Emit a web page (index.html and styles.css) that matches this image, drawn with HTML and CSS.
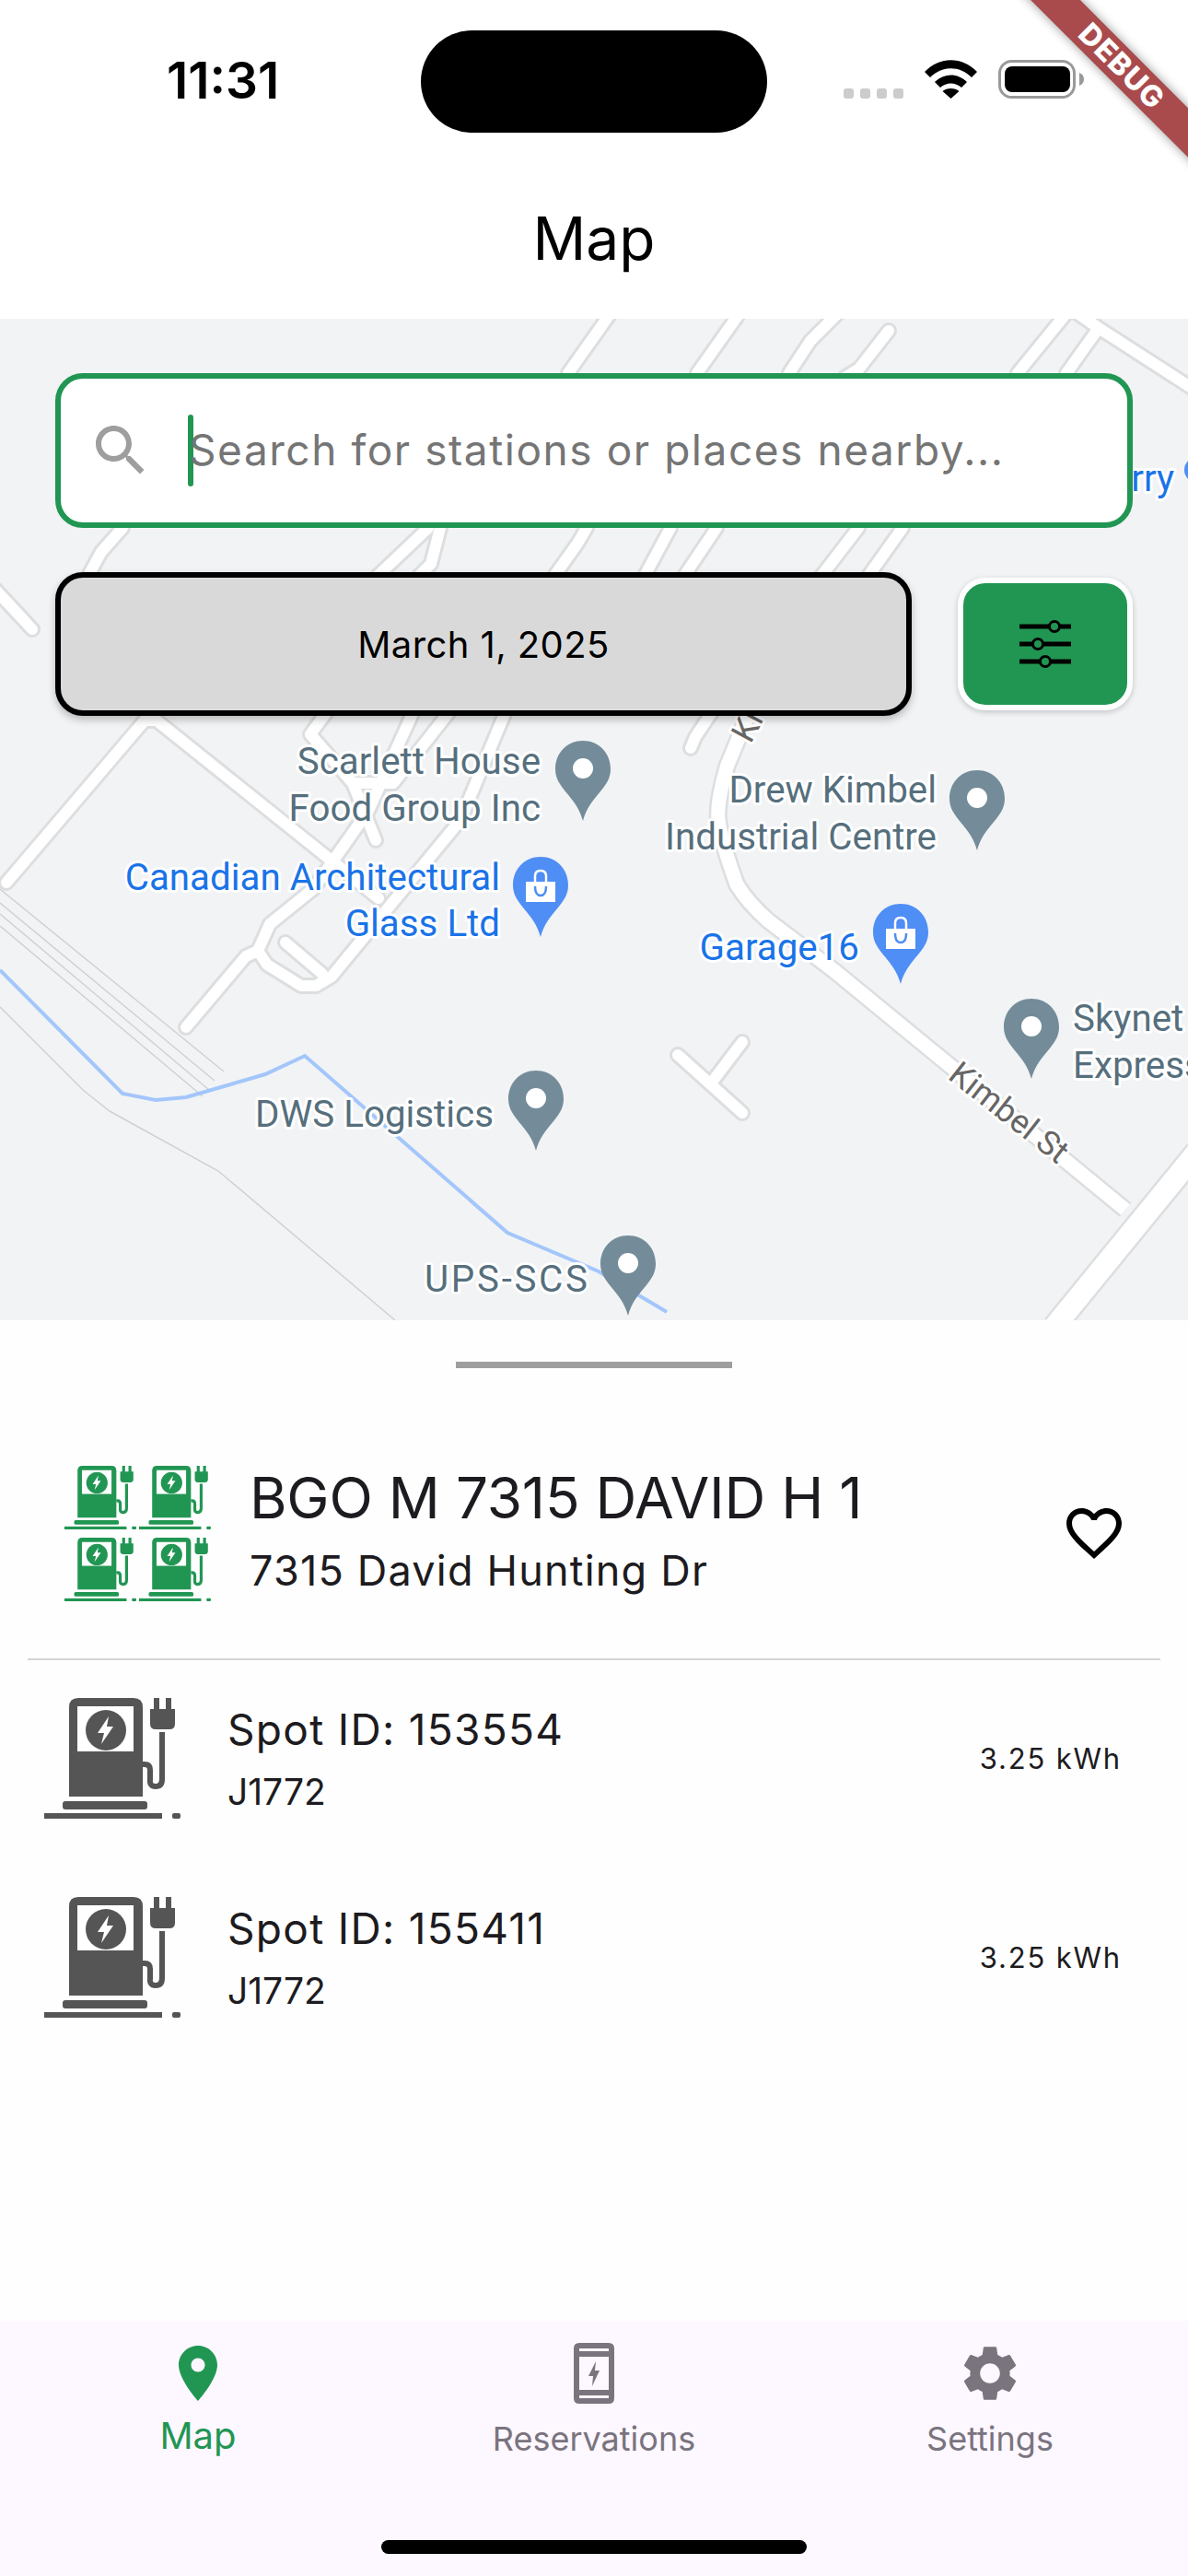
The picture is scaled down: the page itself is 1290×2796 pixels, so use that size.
FILE: index.html
```html
<!DOCTYPE html>
<html lang="en">
<head>
    <meta charset="UTF-8">
    <meta name="viewport" content="width=device-width, initial-scale=1.0">
    <title>Map</title>
    <link rel="stylesheet" href="styles.css">
</head>
<body>
    <svg class="defs" width="0" height="0">
        <defs>
            <symbol id="charger" viewBox="0 0 150 131">
                <path fill="currentColor" d="M27 107V10Q27 0 37 0H97Q107 0 107 10V107Z"/>
                <rect x="36" y="9" width="61" height="49" fill="#fff"/>
                <circle cx="67" cy="35" r="22" fill="currentColor"/>
                <polygon fill="#fff" points="70,20 58,38 65,38 62,50 75,31 68,31"/>
                <rect x="119" y="0" width="6" height="14" fill="currentColor"/>
                <rect x="132" y="0" width="6" height="14" fill="currentColor"/>
                <path fill="currentColor" d="M115 12H142V28Q142 34 136 34H121Q115 34 115 28Z"/>
                <path fill="none" stroke="currentColor" stroke-width="6" d="M128 37V88Q128 96 121 96T115 88V78Q115 72 109 72H107"/>
                <rect x="20" y="112" width="92" height="9" rx="3" fill="currentColor"/>
                <rect x="0" y="125" width="128" height="6" fill="currentColor"/>
                <rect x="139" y="125" width="9" height="6" rx="2" fill="currentColor"/>
            </symbol>
            <symbol id="pin-gray" viewBox="0 0 60 87">
                <path fill="#748c99" d="M30 0C13 0 0 13 0 31C0 52 23 60 30 87C37 60 60 52 60 31C60 13 47 0 30 0Z"/>
                <circle cx="30" cy="30" r="11" fill="#fff"/>
            </symbol>
            <symbol id="pin-blue" viewBox="0 0 60 87">
                <path fill="#4f8ef5" d="M30 0C13 0 0 13 0 31C0 52 23 60 30 87C37 60 60 52 60 31C60 13 47 0 30 0Z"/>
                <path fill="none" stroke="#fff" stroke-width="2.5" d="M24 28V21Q24 15 30 15T36 21V28"/>
                <rect x="14" y="27" width="32" height="22" fill="#fff"/>
                <path fill="none" stroke="#4f8ef5" stroke-width="2.5" d="M24 32Q24 42 30 42T36 32"/>
            </symbol>
            <g id="roads" fill="none" stroke-linecap="round" stroke-linejoin="round">
                <path d="M663 340L617 405M803 340L757 405M910 340L880 370L857 405M965 359L933 400L917 410"/>
                <path d="M1158 340L1105 405M1193 356L1158 405M1170 340L1193 356L1300 425"/>
                <path d="M133 573L110 599L98 621L80 660M465 573L410 625M478 573L468 612L455 625"/>
                <path d="M637 573L627 590L602 625M728 573L700 625M778 573L743 625M932 573L892 625M980 573L943 625"/>
                <path d="M-5 640L35 683"/>
                <path d="M7 958L157 782L170 782L411 975"/>
                <path d="M357 770L337 797L383 850L408 912M383 850L427 850L490 770"/>
                <path d="M202 1115L267 1038L280 1032L293 1003L340 965L400 880L450 770"/>
                <path d="M280 1032L290 1047L327 1070L343 1070L360 1060L500 890L550 770"/>
                <path d="M310 1023L350 1057"/>
                <path d="M775 770L755 800L750 812"/>
                <path d="M806 1131L772 1176M736 1145L806 1208"/>
            </g>
            <path id="kimbel" fill="none" d="M815 770L790 830Q778 870 780 890T800 960Q812 980 835 1000L905 1053L1222 1313"/>
        </defs>
    </svg>

    <div class="debug-corner"><div class="debug-banner">DEBUG</div></div>

    <header class="status-bar">
        <div class="time">11:31</div>
        <div class="island"></div>
        <div class="status-icons">
            <div class="signal"><span></span><span></span><span></span><span></span></div>
            <svg class="wifi" width="57" height="42" viewBox="0 0 57 42">
                <path d="M0 13C16 -4 41 -4 57 13L51 19C38 6 19 6 6 19Z"/>
                <path d="M11 24C21 14 36 14 46 24L40 30C33 24 24 24 17 30Z"/>
                <path d="M19.5 34C24 30 33 30 37.5 34L28.5 42Z"/>
            </svg>
            <svg class="battery" width="93" height="42" viewBox="0 0 93 42">
                <rect x="1.5" y="1.5" width="81" height="39" rx="13" fill="none" stroke="#999" stroke-width="3"/>
                <rect x="7" y="7" width="71" height="28" rx="8"/>
                <path fill="#999" d="M88 14Q93 16 93 21T88 28Z"/>
            </svg>
        </div>
    </header>
    <div class="app-title">Map</div>

    <section class="map">
        <svg class="map-canvas" width="1290" height="1087" viewBox="0 346 1290 1087">
            <rect x="0" y="346" width="1290" height="1087" fill="#f1f3f5"/>
            <g fill="none" stroke="#cfd1d3" stroke-width="1.5">
                <path d="M0 965L243 1163M0 980L233 1173M0 992L227 1183M0 1005L220 1190"/>
                <path d="M0 1093L90 1183L119 1206L237 1271L429 1433"/>
            </g>
            <use href="#roads" stroke="#dcdee0" stroke-width="18"/>
            <use href="#roads" stroke="#fff" stroke-width="12"/>
            <use href="#kimbel" stroke="#dcdee0" stroke-width="20"/>
            <use href="#kimbel" stroke="#fff" stroke-width="15"/>
            <path d="M1145 1440L1300 1250" fill="none" stroke="#dcdee0" stroke-width="28"/>
            <path d="M1145 1440L1300 1250" fill="none" stroke="#fff" stroke-width="23"/>
            <path class="river" d="M0 1053L133 1187L169 1194L202 1191L288 1166L331 1146L551 1338L650 1380L724 1424"/>

            <text class="label road-label" transform="translate(1028 1170) rotate(38)">Kimbel St</text>
            <text class="label road-label" transform="translate(815 808) rotate(-62)">Ki</text>
            <text class="label blue" x="1275" y="533" text-anchor="end">rry</text>
            <circle cx="1300" cy="510" r="14" fill="#4f8ef5"/>

            <g class="labels">
                <text class="label gray" x="587" y="840" text-anchor="end">Scarlett House</text>
                <text class="label gray" x="587" y="891" text-anchor="end">Food Group Inc</text>
                <text class="label gray" x="1017" y="871" text-anchor="end">Drew Kimbel</text>
                <text class="label gray" x="1017" y="922" text-anchor="end">Industrial Centre</text>
                <text class="label blue" x="543" y="966" text-anchor="end">Canadian Architectural</text>
                <text class="label blue" x="543" y="1016" text-anchor="end">Glass Ltd</text>
                <text class="label blue" x="933" y="1042" text-anchor="end">Garage16</text>
                <text class="label gray" x="1165" y="1119">Skynet</text>
                <text class="label gray" x="1165" y="1170">Express</text>
                <text class="label gray" x="536" y="1223" text-anchor="end">DWS Logistics</text>
                <text class="label gray" x="461" y="1402" textLength="177">UPS-SCS</text>
            </g>
            <use href="#pin-gray" x="603" y="804" width="60" height="87"/>
            <use href="#pin-gray" x="1031" y="836" width="60" height="87"/>
            <use href="#pin-blue" x="557" y="930" width="60" height="87"/>
            <use href="#pin-blue" x="948" y="981" width="60" height="87"/>
            <use href="#pin-gray" x="1090" y="1084" width="60" height="87"/>
            <use href="#pin-gray" x="552" y="1162" width="60" height="87"/>
            <use href="#pin-gray" x="652" y="1341" width="60" height="87"/>
        </svg>

        <div class="map-controls">
            <div class="search-box">
                <svg class="search-icon" width="72" height="72" viewBox="0 0 24 24"><path d="M15.5 14h-.79l-.28-.27C15.41 12.59 16 11.11 16 9.5 16 5.91 13.09 3 9.5 3S3 5.91 3 9.5 5.91 16 9.5 16c1.61 0 3.09-.59 4.23-1.57l.27.28v.79l5 4.99L20.49 19l-4.99-5zm-6 0C7.01 14 5 11.99 5 9.5S7.01 5 9.5 5 14 7.01 14 9.5 11.99 14 9.5 14z"/></svg>
                <span class="cursor"></span>
                <span class="placeholder">Search for stations or places nearby...</span>
            </div>
            <div class="date-row">
                <div class="date-btn">March 1, 2025</div>
                <div class="filter-btn">
                    <svg width="56" height="54" viewBox="0 0 56 54">
                        <path d="M0 8H56M0 27H56M0 46H56" stroke="#000" stroke-width="5" fill="none"/>
                        <circle cx="38" cy="8" r="5.5" fill="#219653" stroke="#000" stroke-width="3"/>
                        <circle cx="20" cy="27" r="5.5" fill="#219653" stroke="#000" stroke-width="3"/>
                        <circle cx="28" cy="46" r="5.5" fill="#219653" stroke="#000" stroke-width="3"/>
                    </svg>
                </div>
            </div>
        </div>
    </section>

    <section class="sheet">
        <div class="handle"></div>
        <div class="station">
            <div class="station-tiles">
                <svg><use href="#charger"/></svg>
                <svg><use href="#charger"/></svg>
                <svg><use href="#charger"/></svg>
                <svg><use href="#charger"/></svg>
            </div>
            <div class="station-text">
                <div class="station-name">BGO M 7315 DAVID H 1</div>
                <div class="station-addr">7315 David Hunting Dr</div>
            </div>
            <svg class="heart" width="72" height="72" viewBox="0 0 24 24"><path d="M16.5 3c-1.74 0-3.41.81-4.5 2.09C10.91 3.81 9.24 3 7.5 3 4.42 3 2 5.42 2 8.5c0 3.78 3.4 6.86 8.55 11.54L12 21.35l1.45-1.32C18.6 15.36 22 12.28 22 8.5 22 5.42 19.58 3 16.5 3zm-4.4 15.55l-.1.1-.1-.1C7.14 14.24 4 11.39 4 8.5 4 6.5 5.5 5 7.5 5c1.54 0 3.04.99 3.57 2.36h1.87C13.46 5.99 14.96 5 16.5 5c2 0 3.5 1.5 3.5 3.5 0 2.89-3.14 5.74-7.9 10.05z"/></svg>
        </div>
        <hr class="divider">
        <div class="spot">
            <svg class="spot-icon" width="150" height="131"><use href="#charger"/></svg>
            <div class="spot-text">
                <div class="spot-id">Spot ID: 153554</div>
                <div class="spot-type">J1772</div>
            </div>
            <div class="spot-kwh">3.25 kWh</div>
        </div>
        <div class="spot">
            <svg class="spot-icon" width="150" height="131"><use href="#charger"/></svg>
            <div class="spot-text">
                <div class="spot-id">Spot ID: 155411</div>
                <div class="spot-type">J1772</div>
            </div>
            <div class="spot-kwh">3.25 kWh</div>
        </div>
    </section>

    <nav class="bottom-nav">
        <div class="nav-items">
            <div class="nav-item active">
                <svg width="72" height="72" viewBox="0 0 24 24"><path d="M12 2C8.13 2 5 5.13 5 9c0 5.25 7 13 7 13s7-7.75 7-13c0-3.87-3.13-7-7-7zm0 9.5c-1.38 0-2.5-1.12-2.5-2.5s1.12-2.5 2.5-2.5 2.5 1.12 2.5 2.5-1.12 2.5-2.5 2.5z"/></svg>
                <span>Map</span>
            </div>
            <div class="nav-item">
                <svg width="72" height="72" viewBox="-14 -3 72 72"><path fill-rule="evenodd" d="M6 0H38Q44 0 44 6V60Q44 66 38 66H6Q0 66 0 60V6Q0 0 6 0ZM6 6V9H38V6ZM6 15V51H38V15ZM6 57V60H38V57Z"/><polygon points="24,20 16,36 21,36 20,47 28,30 23,30"/></svg>
                <span>Reservations</span>
            </div>
            <div class="nav-item">
                <svg width="72" height="72" viewBox="0 0 24 24"><path d="M19.14 12.94c.04-.3.06-.61.06-.94 0-.32-.02-.64-.07-.94l2.03-1.58c.18-.14.23-.41.12-.61l-1.92-3.32c-.12-.22-.37-.29-.59-.22l-2.39.96c-.5-.38-1.03-.7-1.62-.94l-.36-2.54c-.04-.24-.24-.41-.48-.41h-3.84c-.24 0-.43.17-.47.41l-.36 2.54c-.59.24-1.13.57-1.62.94l-2.39-.96c-.22-.08-.47 0-.59.22L2.74 8.87c-.12.21-.08.47.12.61l2.03 1.58c-.05.3-.09.63-.09.94s.02.64.07.94l-2.03 1.58c-.18.14-.23.41-.12.61l1.92 3.32c.12.22.37.29.59.22l2.39-.96c.5.38 1.03.7 1.62.94l.36 2.54c.05.24.24.41.48.41h3.84c.24 0 .44-.17.47-.41l.36-2.54c.59-.24 1.13-.56 1.62-.94l2.39.96c.22.08.47 0 .59-.22l1.92-3.32c.12-.22.07-.47-.12-.61l-2.01-1.58zM12 15.6c-1.98 0-3.6-1.62-3.6-3.6s1.62-3.6 3.6-3.6 3.6 1.62 3.6 3.6-1.62 3.6-3.6 3.6z"/></svg>
                <span>Settings</span>
            </div>
        </div>
        <div class="home-indicator"></div>
    </nav>
</body>
</html>
```

FILE: styles.css
```css
html, body{
    margin: 0;
    width: 1290px;
    height: 2796px;
    overflow: hidden;
}
body{
    display: flex;
    flex-direction: column;
    background-color: #fefefe;
    font-family: "Inter", "Noto Sans", sans-serif;
    color: #1d1b20;
    position: relative;
}
.defs{
    position: absolute;
}

/* status bar */
.status-bar{
    height: 139px;
    padding-top: 33px;
    display: grid;
    grid-template-columns: 457px 376px 1fr;
    align-items: start;
    background-color: #fff;
}
.time{
    padding-left: 181px;
    height: 111px;
    line-height: 109px;
    font-size: 55px;
    font-weight: 600;
    color: #000;
}
.island{
    height: 111px;
    border-radius: 56px;
    background-color: #000;
}
.status-icons{
    height: 111px;
    padding-left: 83px;
    display: flex;
    align-items: flex-start;
    padding-top: 32px;
    box-sizing: border-box;
}
.signal{
    display: flex;
    gap: 7px;
    margin-top: 31px;
}
.signal span{
    width: 11px;
    height: 11px;
    border-radius: 3px;
    background-color: #ccc;
}
.wifi{
    margin-left: 23px;
}
.battery{
    margin-left: 23px;
}

.debug-corner{
    position: absolute;
    top: 0;
    left: 1050px;
    width: 240px;
    height: 240px;
    overflow: hidden;
    z-index: 5;
}
.debug-banner{
    position: absolute;
    left: -2px;
    top: 53px;
    width: 340px;
    height: 38px;
    line-height: 38px;
    text-align: center;
    transform: rotate(45deg);
    background-color: #a94a4d;
    box-shadow: 0 0 12px rgba(0, 0, 0, 0.4);
    color: #fff;
    font-size: 32px;
    font-weight: 800;
    letter-spacing: 1px;
}

.app-title{
    height: 174px;
    line-height: 174px;
    text-align: center;
    font-size: 64px;
    color: #000;
    background-color: #fff;
}

/* map */
.map{
    position: relative;
    height: 1087px;
    flex-shrink: 0;
}
.map-canvas{
    display: block;
}
.river{
    fill: none;
    stroke: #a3c6fb;
    stroke-width: 4;
}
.label{
    font-family: "Roboto", sans-serif;
    font-size: 40.3px;
    paint-order: stroke;
    stroke: #fff;
    stroke-width: 6px;
    stroke-linejoin: round;
}
.label.gray{
    fill: #566f7d;
}
.label.blue{
    fill: #1a73e8;
}
.road-label{
    fill: #666;
    font-size: 36px;
}
.map-controls{
    position: absolute;
    top: 59px;
    left: 60px;
    width: 1170px;
}
.search-box{
    height: 168px;
    box-sizing: border-box;
    border: 6px solid #219653;
    border-radius: 30px;
    background-color: #fff;
    display: flex;
    align-items: center;
    padding-left: 29px;
}
.search-icon{
    fill: #9e9e9e;
    margin-right: 37px;
}
.cursor{
    width: 6px;
    height: 78px;
    border-radius: 3px;
    background-color: #219653;
    margin-right: -5px;
}
.placeholder{
    font-size: 46px;
    letter-spacing: 1.55px;
    padding-bottom: 3px;
    color: #757575;
    white-space: nowrap;
}
.date-row{
    margin-top: 48px;
    display: flex;
    align-items: center;
    justify-content: space-between;
}
.date-btn{
    width: 930px;
    height: 156px;
    box-sizing: border-box;
    border: 6px solid #000;
    border-radius: 30px;
    background-color: #d9d9d9;
    box-shadow: 0 4px 8px rgba(0, 0, 0, 0.25);
    display: flex;
    align-items: center;
    justify-content: center;
    font-size: 40px;
    letter-spacing: 0.4px;
    color: #000;
}
.filter-btn{
    width: 190px;
    height: 144px;
    box-sizing: border-box;
    border: 6px solid #fff;
    border-radius: 30px;
    background-color: #219653;
    box-shadow: 0 2px 6px rgba(0, 0, 0, 0.2);
    display: flex;
    align-items: center;
    justify-content: center;
}

/* bottom sheet */
.sheet{
    flex: 1;
    padding-top: 45px;
    background-color: #fefefe;
}
.handle{
    width: 300px;
    height: 7px;
    margin: 0 auto;
    background-color: #9e9e9e;
}
.station{
    margin-top: 100px;
    padding: 0 66px 0 69px;
    height: 158px;
    display: flex;
    align-items: center;
}
.station-tiles{
    width: 162px;
    display: grid;
    grid-template-columns: 81px 81px;
    grid-auto-rows: 69px;
    row-gap: 9px;
    color: #219653;
}
.station-tiles svg{
    width: 81px;
    height: 69px;
}
.station-text{
    flex: 1;
    margin-left: 40px;
}
.station-name{
    font-size: 62px;
    line-height: 82px;
    letter-spacing: -0.2px;
}
.station-addr{
    font-size: 45px;
    line-height: 76px;
    letter-spacing: 1.2px;
}
.divider{
    border: 0;
    height: 2px;
    margin: 57px 30px 0;
    background-color: #d4d4d4;
}
.spot{
    height: 131px;
    padding: 41px 72px 44px 48px;
    display: flex;
    align-items: center;
}
.spot-icon{
    color: #555;
}
.spot-text{
    flex: 1;
    margin-left: 49px;
    padding-top: 5px;
}
.spot-id{
    font-size: 46px;
    line-height: 68px;
    letter-spacing: 1.3px;
}
.spot-type{
    font-size: 39px;
    line-height: 68px;
}
.spot-kwh{
    font-size: 31px;
    letter-spacing: 1.8px;
}

/* bottom nav */
.bottom-nav{
    height: 277px;
    flex-shrink: 0;
    box-sizing: border-box;
    padding-top: 21px;
    background-color: #fdf7ff;
}
.nav-items{
    display: grid;
    grid-template-columns: repeat(3, 1fr);
}
.nav-item{
    display: flex;
    flex-direction: column;
    align-items: center;
    color: #79747e;
    fill: #79747e;
    font-size: 36px;
    line-height: 50px;
}
.nav-item svg{
    margin-bottom: 10px;
}
.nav-item.active{
    color: #219653;
    fill: #219653;
    font-size: 40px;
}
.nav-item.active svg{
    margin-bottom: 7px;
}
.home-indicator{
    width: 462px;
    height: 15px;
    margin: 85px auto 0;
    border-radius: 8px;
    background-color: #000;
}
```
